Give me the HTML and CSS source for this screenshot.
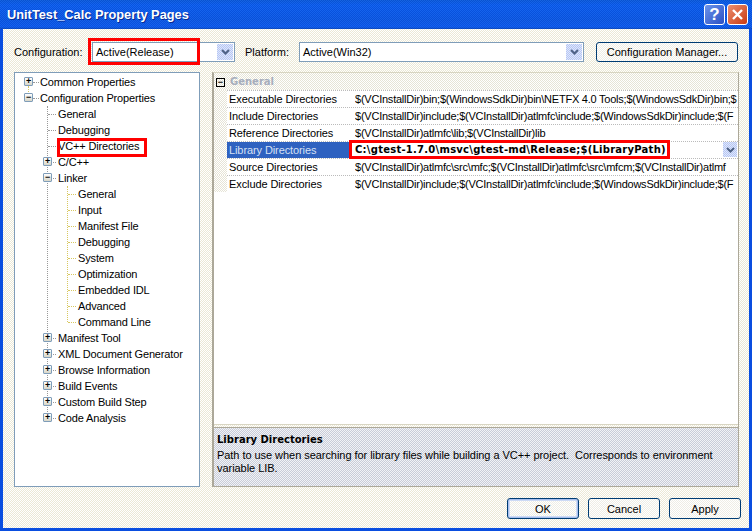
FILE: index.html
```html
<!DOCTYPE html>
<html>
<head>
<meta charset="utf-8">
<title>UnitTest_Calc Property Pages</title>
<link rel="stylesheet" href="styles.css">
</head>
<body>
<div class="window">
  <header class="titlebar">
    <span class="title">UnitTest_Calc Property Pages</span>
    <span class="capbtn help">?</span>
    <span class="capbtn close"><svg width="13" height="13" viewBox="0 0 13 13"><path d="M2 2l9 9M11 2l-9 9" stroke="#fff" stroke-width="2.4" fill="none"/></svg></span>
  </header>
  <main class="client">
    <div class="toolbar">
      <label class="cfg-label">Configuration:</label>
      <div class="combo combo-cfg"><span class="combo-text">Active(Release)</span><span class="arrow"><svg width="9" height="6" viewBox="0 0 9 6"><path d="M1 1l3.5 3.5L8 1" stroke="#4d6185" stroke-width="2" fill="none"/></svg></span></div>
      <label class="plat-label">Platform:</label>
      <div class="combo combo-plat"><span class="combo-text">Active(Win32)</span><span class="arrow"><svg width="9" height="6" viewBox="0 0 9 6"><path d="M1 1l3.5 3.5L8 1" stroke="#4d6185" stroke-width="2" fill="none"/></svg></span></div>
      <button class="btn btn-mgr">Configuration Manager...</button>
    </div>
    <div class="panes">
      <nav class="tree">
        <div class="node l0 has-line"><i class="box">+</i>Common Properties</div>
        <div class="node l0"><i class="box">−</i>Configuration Properties</div>
        <div class="children">
          <div class="node l1 leaf">General</div>
          <div class="node l1 leaf">Debugging</div>
          <div class="node l1 leaf">VC++ Directories</div>
          <div class="node l1"><i class="box">+</i>C/C++</div>
          <div class="node l1"><i class="box">−</i>Linker</div>
          <div class="sub">
            <div class="node l2">General</div>
            <div class="node l2">Input</div>
            <div class="node l2">Manifest File</div>
            <div class="node l2">Debugging</div>
            <div class="node l2">System</div>
            <div class="node l2">Optimization</div>
            <div class="node l2">Embedded IDL</div>
            <div class="node l2">Advanced</div>
            <div class="node l2">Command Line</div>
          </div>
          <div class="node l1"><i class="box">+</i>Manifest Tool</div>
          <div class="node l1"><i class="box">+</i>XML Document Generator</div>
          <div class="node l1"><i class="box">+</i>Browse Information</div>
          <div class="node l1"><i class="box">+</i>Build Events</div>
          <div class="node l1"><i class="box">+</i>Custom Build Step</div>
          <div class="node l1"><i class="box">+</i>Code Analysis</div>
        </div>
      </nav>
      <section class="props">
        <div class="grid">
          <div class="group"><i class="gbox">−</i><span class="gname">General</span></div>
          <div class="row"><span class="name">Executable Directories</span><span class="value">$(VCInstallDir)bin;$(WindowsSdkDir)bin\NETFX 4.0 Tools;$(WindowsSdkDir)bin;$</span></div>
          <div class="row"><span class="name">Include Directories</span><span class="value">$(VCInstallDir)include;$(VCInstallDir)atlmfc\include;$(WindowsSdkDir)include;$(F</span></div>
          <div class="row"><span class="name">Reference Directories</span><span class="value">$(VCInstallDir)atlmfc\lib;$(VCInstallDir)lib</span></div>
          <div class="row selected"><span class="name">Library Directories</span><span class="value">C:\gtest-1.7.0\msvc\gtest-md\Release;$(LibraryPath)</span><span class="arrow row-arrow"><svg width="9" height="6" viewBox="0 0 9 6"><path d="M1 1l3.5 3.5L8 1" stroke="#4d6185" stroke-width="2" fill="none"/></svg></span></div>
          <div class="row"><span class="name">Source Directories</span><span class="value">$(VCInstallDir)atlmfc\src\mfc;$(VCInstallDir)atlmfc\src\mfcm;$(VCInstallDir)atlmf</span></div>
          <div class="row"><span class="name">Exclude Directories</span><span class="value">$(VCInstallDir)include;$(VCInstallDir)atlmfc\include;$(WindowsSdkDir)include;$(F</span></div>
        </div>
        <div class="splitter"></div>
        <div class="desc">
          <strong class="desc-title">Library Directories</strong>
          <p class="desc-text">Path to use when searching for library files while building a VC++ project.&nbsp; Corresponds to environment<br>variable LIB.</p>
        </div>
      </section>
    </div>
    <div class="actions">
      <button class="btn btn-act btn-default">OK</button>
      <button class="btn btn-act">Cancel</button>
      <button class="btn btn-act">Apply</button>
    </div>
  </main>
  <div class="mark mark-cfg"></div>
  <div class="mark mark-vc"></div>
  <div class="mark mark-lib"></div>
</div>
</body>
</html>
```
FILE: styles.css
```css
* { box-sizing: border-box; }
html, body { margin: 0; padding: 0; }
body { width: 752px; height: 531px; overflow: hidden; background: #fff; }
.window {
  position: relative; width: 752px; height: 531px;
  display: flex; flex-direction: column;
  font-family: "Liberation Sans", sans-serif; font-size: 11px; color: #000;
  background: #0a4ee0; padding: 0 3px 3px;
}
.titlebar {
  height: 29px; margin: 0 -3px; flex: none;
  display: flex; align-items: center; padding: 0 4px 0 7px;
  background-image: repeating-conic-gradient(rgba(0,30,140,.16) 0 25%, rgba(255,255,255,.05) 0 50%), linear-gradient(#0a5bdc 0, #0a5ef0 5px, #0a58e6 20px, #0a5cf0 27px, #0649c0 29px);
  background-size: 2px 2px, auto;
}
.title { flex: 1; color: #fff; font: bold 12.8px "Liberation Sans", sans-serif; white-space: nowrap; text-shadow: 1px 1px 0 #0a2a90; }
.capbtn {
  width: 21px; height: 21px; margin-left: 2px; border: 1px solid #fff; border-radius: 3px;
  display: flex; align-items: center; justify-content: center;
}
.help { background: linear-gradient(135deg, #6c93ea, #2a50c4); color: #fff; font: bold 17px "Liberation Sans", sans-serif; }
.close { background: linear-gradient(135deg, #ec8f70, #c93a12); }
.client {
  flex: 1; display: flex; flex-direction: column; min-height: 0;
  padding: 13px 10px 9px 11px;
  background-color: #ece9d8;
  background-image: repeating-conic-gradient(#ebe8d5 0 25%, #fff 0 50%);
  background-size: 2px 2px;
}
.toolbar { display: flex; align-items: center; height: 20px; flex: none; }
.cfg-label { width: 78px; flex: none; }
.combo {
  height: 20px; background: #fff; border: 1px solid #7f9db9;
  display: flex; align-items: center; justify-content: space-between; padding: 0 1px 0 3px; flex: none;
}
.combo-cfg { width: 143px; }
.combo-plat { width: 285px; }
.plat-label { width: 64px; flex: none; padding-left: 10px; }
.arrow {
  width: 16px; height: 16px; flex: none; display: flex; align-items: center; justify-content: center;
  background-color: #c1d2fa;
  background-image: repeating-conic-gradient(#b5c6f4 0 25%, #e0e7fb 0 50%);
  background-size: 2px 2px;
}
.btn {
  font: 11px "Liberation Sans", sans-serif; color: #000; padding: 0; border: 1px solid #003c74; border-radius: 3px;
  background-color: #f4f4ee;
  background-image: repeating-conic-gradient(#eeede5 0 25%, #fff 0 50%);
  background-size: 2px 2px;
}
.btn-mgr { width: 142px; height: 20px; margin-left: 12px; flex: none; }
.panes { flex: 1; min-height: 0; display: flex; margin-top: 10px; }
.tree {
  width: 186px; flex: none; background: #fff; border: 1px solid #7f9db9; padding-top: 1px; letter-spacing: -0.15px;
}
.node { position: relative; height: 16px; line-height: 16px; white-space: nowrap; }
.l0 { padding-left: 25px; }
.l1 { padding-left: 43px; }
.l2 { padding-left: 63px; }
.box, .gbox { font-style: normal; position: absolute; display: flex; align-items: center; justify-content: center; }
.box {
  width: 9px; height: 9px; top: 3px; border: 1px solid #7f9db9; border-radius: 1px;
  background: linear-gradient(#fff, #d8d6c8); font: bold 9px/1 "Liberation Sans", sans-serif; z-index: 1;
}
.l0 .box { left: 9px; }
.l1 .box { left: 28px; }
.node::before { content: ""; position: absolute; top: 8px; border-top: 1px dotted #999; }
.l0::before { left: 18px; width: 6px; }
.l1::before { left: 33px; width: 8px; }
.l2::before { left: 53px; width: 8px; border-color: #d8c860; }
.has-line::after { content: ""; position: absolute; left: 13px; top: 12px; height: 10px; border-left: 1px dotted #d8c860; }
.children { position: relative; }
.children::before { content: ""; position: absolute; left: 32px; top: 0; bottom: 8px; border-left: 1px dotted #999; }
.sub { position: relative; }
.sub::before { content: ""; position: absolute; left: 52px; top: 0; bottom: 8px; border-left: 1px dotted #d8c860; }
.props { width: 527px; margin-left: 12px; flex: none; display: flex; flex-direction: column; border: 1px solid #aca899; border-left-width: 2px; border-top-color: #d8d5c2; }
.grid { flex: 1; min-height: 0; background: #fff; overflow: hidden; }
.group {
  height: 17px; display: flex; align-items: center; position: relative; padding-left: 16px;
  background-color: #f4f4ee;
  background-image: repeating-conic-gradient(#e6e4d6 0 25%, #fff 0 50%);
  background-size: 2px 2px;
}
.gbox { left: 2px; top: 5px; width: 9px; height: 9px; border: 1px solid #000; font: bold 9px/1 "Liberation Sans", sans-serif; }
.gname { font: 700 10px "DejaVu Sans", sans-serif; color: #a7aebd; }
.row {
  height: 17px; line-height: 16px; display: flex; position: relative; white-space: nowrap;
  border-top: 1px dotted #bbb; margin-left: 13px;
}
.row::before {
  content: ""; position: absolute; left: -13px; top: -1px; bottom: 0; width: 13px;
  background-color: #f4f4ee;
  background-image: repeating-conic-gradient(#e6e4d6 0 25%, #fff 0 50%);
  background-size: 2px 2px;
}
.name { width: 128px; flex: none; padding-left: 2px; letter-spacing: -0.1px; }
.value { flex: 1; min-width: 0; overflow: hidden; letter-spacing: -0.23px; }
.selected .name {
  width: 123px; margin-right: 5px; color: #d6e0f4; background: #2f62c0;
}
.selected .value { font: 700 10px/16px "DejaVu Sans", sans-serif; letter-spacing: 0.25px; padding-right: 20px; }
.row-arrow { position: absolute; right: 1px; top: 0; width: 14px; height: 15px; }
.splitter { height: 3px; flex: none; border-top: 1px solid #d8d5c2; }
.desc {
  height: 59px; flex: none; padding: 4px 3px 2px; border-top: 1px solid #aca899;
  background-color: #dcdfe8;
  background-image: repeating-conic-gradient(#c8ccd8 0 25%, #f2f3f6 0 50%);
  background-size: 2px 2px;
}
.desc-title { display: block; font: 700 10px/16px "DejaVu Sans", sans-serif; }
.desc-text { margin: 1px 0 0; line-height: 13px; white-space: nowrap; letter-spacing: -0.05px; }
.actions { display: flex; justify-content: flex-end; gap: 9px; margin-top: 11px; flex: none; margin-right: -2px; }
.btn-act { width: 72px; height: 21px; }
.btn-default { box-shadow: inset 0 0 0 1px #a8c0ee, inset 0 0 0 2px #cddaf5; }
.mark { position: absolute; border: 3px solid #f00; pointer-events: none; }
.mark-cfg { left: 88px; top: 38px; width: 112px; height: 27px; }
.mark-vc { left: 57px; top: 138px; width: 90px; height: 19px; }
.mark-lib { left: 349px; top: 140px; width: 321px; height: 19px; }
```
